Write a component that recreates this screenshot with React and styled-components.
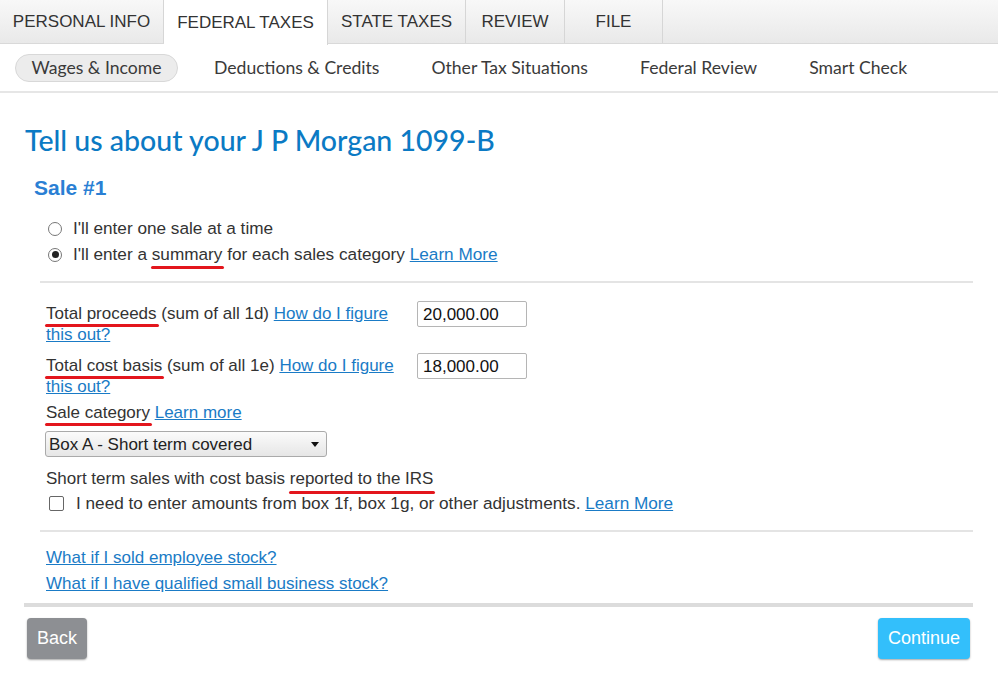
import React from 'react';
import styled, { createGlobalStyle } from 'styled-components';

const colors = {
  text: '#333333',
  link: '#1a7bc6',
  heading: '#0b7ac4',
  sale: '#2a7fd4',
  rule: '#e4e4e4',
  red: '#e3161d',
};

const GlobalStyle = createGlobalStyle`
  html, body {
    margin: 0;
    padding: 0;
    background: #ffffff;
  }
  body {
    font-family: "Liberation Sans", Arial, sans-serif;
    color: ${colors.text};
  }
`;

const Page = styled.div`
  width: 998px;
  height: 680px;
  overflow: hidden;
  background: #fff;
`;

const TabBar = styled.div`
  display: flex;
  height: 44px;
  background: linear-gradient(#f8f8f8, #e9e9e9);
  border-bottom: 1px solid #d9d9d9;
  box-sizing: border-box;
`;

const Tab = styled.div`
  width: ${(p) => p.w}px;
  box-sizing: border-box;
  display: flex;
  align-items: center;
  justify-content: center;
  font-size: 17px;
  color: #333;
  border-right: 1px solid #d6d6d6;
  background: ${(p) => (p.active ? '#fff' : 'transparent')};
  height: ${(p) => (p.active ? '45px' : '43px')};
  padding-top: 1px;
  position: relative;
  z-index: ${(p) => (p.active ? 1 : 0)};
`;

const SubNav = styled.div`
  display: flex;
  align-items: center;
  height: 47px;
  padding-left: 15px;
  border-bottom: 2px solid #e6e6e6;
  font-family: Lato, "Open Sans", sans-serif;
  font-size: 17.6px;
  color: #3a3a3a;
`;

const SubItem = styled.div`
  box-sizing: border-box;
  height: 28px;
  display: flex;
  align-items: center;
  justify-content: center;
  margin-right: ${(p) => p.gap}px;
  width: ${(p) => (p.w ? `${p.w}px` : 'auto')};
  background: ${(p) => (p.active ? '#ececec' : 'transparent')};
  border: ${(p) => (p.active ? '1px solid #d8d8d8' : 'none')};
  border-radius: 14px;
`;

const Main = styled.div`
  padding: 0 25px 0 24px;
`;

const Heading = styled.h1`
  margin: 29px 0 0 1px;
  font-family: Lato, "Open Sans", sans-serif;
  font-weight: 500;
  font-size: 28.5px;
  line-height: 36px;
  color: ${colors.heading};
`;

const SaleTitle = styled.h2`
  margin: 17px 0 0 10px;
  font-size: 21px;
  line-height: 26px;
  font-weight: bold;
  color: ${colors.sale};
`;

const RadioGroup = styled.div`
  margin: 17px 0 0 24px;
  display: flex;
  flex-direction: column;
  gap: 5px;
`;

const RadioRow = styled.label`
  display: flex;
  align-items: center;
  font-size: 17.2px;
  line-height: 21px;
  color: ${colors.text};
`;

const RadioDot = styled.span`
  width: 14px;
  height: 14px;
  border-radius: 50%;
  border: 1px solid #777;
  box-sizing: border-box;
  margin-right: 11px;
  display: flex;
  align-items: center;
  justify-content: center;
  background: #fff;
  &::after {
    content: '';
    width: 7px;
    height: 7px;
    border-radius: 50%;
    background: ${(p) => (p.checked ? '#222' : 'transparent')};
  }
`;

const Rule = styled.div`
  height: ${(p) => p.thick || 2}px;
  background: ${(p) => (p.thick ? '#dcdcdc' : colors.rule)};
  margin: ${(p) => p.m};
`;

const Form = styled.div`
  padding: 18px 0 0 22px;
  font-size: 17px;
  line-height: 21px;
`;

const FieldRow = styled.div`
  display: flex;
  align-items: flex-start;
  margin-bottom: ${(p) => p.mb}px;
`;

const FieldLabel = styled.div`
  width: 360px;
  margin-top: 2px;
`;

const Link = styled.a`
  color: ${colors.link};
  text-decoration: underline;
  cursor: pointer;
`;

const Mark = styled.span`
  position: relative;
  &::after {
    content: '';
    position: absolute;
    left: -1px;
    right: -2px;
    bottom: ${(p) => p.b || -4}px;
    height: 3px;
    border-radius: 2px;
    background: ${colors.red};
  }
`;

const Input = styled.div`
  width: 110px;
  height: 26px;
  box-sizing: border-box;
  border: 1px solid #b5b5b5;
  border-radius: 2px;
  padding: 0 5px;
  display: flex;
  align-items: center;
  font-size: 17px;
  color: #111;
  margin-left: 11px;
`;

const Select = styled.div`
  margin: 8px 0 0 -1px;
  width: 282px;
  height: 26px;
  box-sizing: border-box;
  border: 1px solid #aaa;
  border-radius: 3px;
  background: linear-gradient(#fbfbfb, #e6e6e6);
  display: flex;
  align-items: center;
  justify-content: space-between;
  padding: 0 7px 0 3px;
  font-size: 17px;
  color: #222;
`;

const Caret = styled.span`
  width: 0;
  height: 0;
  border-left: 4px solid transparent;
  border-right: 4px solid transparent;
  border-top: 5px solid #111;
`;

const Note = styled.div`
  margin-top: 11px;
`;

const CheckRow = styled.div`
  display: flex;
  align-items: center;
  margin: 4px 0 0 3px;
  font-size: 17.2px;
`;

const Box = styled.span`
  width: 15px;
  height: 15px;
  box-sizing: border-box;
  border: 1px solid #666;
  border-radius: 2px;
  margin-right: 12px;
  background: #fff;
`;

const LinkList = styled.div`
  padding-left: 22px;
  display: flex;
  flex-direction: column;
  gap: 5px;
  font-size: 17px;
  line-height: 21px;
`;

const Footer = styled.div`
  display: flex;
  justify-content: space-between;
  padding: 11px 3px 0 3px;
`;

const Button = styled.button`
  height: 41px;
  padding: 0 ${(p) => p.px}px;
  border: none;
  border-radius: 4px;
  background: ${(p) => p.bg};
  color: #fff;
  font-family: "Liberation Sans", Arial, sans-serif;
  font-size: 18px;
  box-shadow: 0 1px 2px rgba(0, 0, 0, 0.35);
  cursor: pointer;
`;

const tabs = [
  { label: 'PERSONAL INFO', w: 164 },
  { label: 'FEDERAL TAXES', w: 164, active: true },
  { label: 'STATE TAXES', w: 138 },
  { label: 'REVIEW', w: 99 },
  { label: 'FILE', w: 98 },
];

const subItems = [
  { label: 'Wages & Income', active: true, w: 163, gap: 36 },
  { label: 'Deductions & Credits', gap: 52 },
  { label: 'Other Tax Situations', gap: 52 },
  { label: 'Federal Review', gap: 52 },
  { label: 'Smart Check', gap: 0 },
];

const App = () => {
  return (
    <Page>
      <GlobalStyle />
      <TabBar>
        {tabs.map((t) => (
          <Tab key={t.label} w={t.w} active={t.active}>
            {t.label}
          </Tab>
        ))}
      </TabBar>
      <SubNav>
        {subItems.map((s) => (
          <SubItem key={s.label} active={s.active} w={s.w} gap={s.gap}>
            {s.label}
          </SubItem>
        ))}
      </SubNav>
      <Main>
        <Heading>Tell us about your J P Morgan 1099-B</Heading>
        <SaleTitle>Sale #1</SaleTitle>
        <RadioGroup>
          <RadioRow>
            <RadioDot />
            I'll enter one sale at a time
          </RadioRow>
          <RadioRow>
            <RadioDot checked />
            <span>
              I'll enter a <Mark b={-5}>summary</Mark> for each sales category{' '}
              <Link>Learn More</Link>
            </span>
          </RadioRow>
        </RadioGroup>
        <Rule m="16px 0 0 16px" />
        <Form>
          <FieldRow mb={8}>
            <FieldLabel>
              <Mark>Total proceeds</Mark> (sum of all 1d) <Link>How do I figure this out?</Link>
            </FieldLabel>
            <Input>20,000.00</Input>
          </FieldRow>
          <FieldRow mb={5}>
            <FieldLabel>
              <Mark>Total cost basis</Mark> (sum of all 1e) <Link>How do I figure this out?</Link>
            </FieldLabel>
            <Input>18,000.00</Input>
          </FieldRow>
          <div>
            <Mark>Sale category</Mark> <Link>Learn more</Link>
          </div>
          <Select>
            Box A - Short term covered
            <Caret />
          </Select>
          <Note>
            Short term sales with cost basis <Mark b={-6}>reported to the IRS</Mark>
          </Note>
          <CheckRow>
            <Box />
            <span>
              I need to enter amounts from box 1f, box 1g, or other adjustments.{' '}
              <Link>Learn More</Link>
            </span>
          </CheckRow>
        </Form>
        <Rule m="16px 0 15px 16px" />
        <LinkList>
          <div>
            <Link>What if I sold employee stock?</Link>
          </div>
          <div>
            <Link>What if I have qualified small business stock?</Link>
          </div>
        </LinkList>
        <Rule thick={4} m="9px 0 0 0" />
        <Footer>
          <Button bg="#8d8f93" px={10}>Back</Button>
          <Button bg="#33bffb" px={10}>Continue</Button>
        </Footer>
      </Main>
    </Page>
  );
};

export default App;
